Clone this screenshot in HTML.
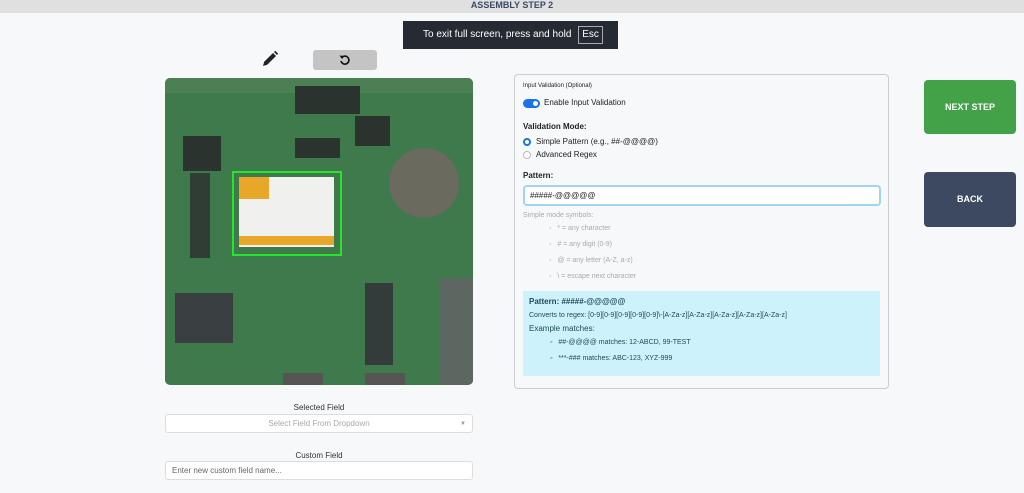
<!DOCTYPE html>
<html><head><meta charset="utf-8"><style>
*{box-sizing:border-box;margin:0;padding:0}
body{width:1024px;height:493px;background:#f7f8fa;font-family:"Liberation Sans",sans-serif;position:relative;overflow:hidden;color:#222}
.a{position:absolute}
.top{left:0;top:0;width:1024px;height:13px;background:#e0e0e0;text-align:center;font-size:9px;font-weight:bold;color:#3a4a66;line-height:10px}
.toast{left:403px;top:21px;width:215px;height:28px;background:#262a33;color:#fff;font-size:10px;line-height:28px;padding-left:20px}
.toast span{display:inline-block;border:1px solid #aaa;line-height:16px;padding:0 3px;margin-left:4px}
.panel{left:514px;top:74px;width:375px;height:315px;border:1px solid #ccc;border-radius:4px;background:#f7f8fa}
.t{position:absolute;font-size:8px;white-space:nowrap}
.g{color:#aaa}
.btn{width:92px;height:54px;border-radius:4px;color:#fff;font-size:9px;font-weight:bold;text-align:center;line-height:54px}
.inp{border:1px solid #ddd;background:#fff;border-radius:3px}
.blk{position:absolute;background:#2a332e}
</style></head><body>
<div class="a top">ASSEMBLY STEP 2</div>
<div class="a toast">To exit full screen, press and hold <span>Esc</span></div>
<svg class="a" style="left:261px;top:50px" width="18" height="18" viewBox="0 0 18 18"><path d="M2 16l1.2-4.2L12 3l3 3-8.8 8.8z" fill="#222"/><path d="M13 2l1.2-1.2 3 3L16 5z" fill="#222"/></svg>
<div class="a" style="left:313px;top:50px;width:64px;height:20px;background:#c4c4c4;border-radius:3px"></div>
<svg class="a" style="left:338px;top:53px" width="14" height="14" viewBox="0 0 14 14"><path d="M3.5 5A4 4 0 1 1 3 8" fill="none" stroke="#111" stroke-width="1.6"/><path d="M1.5 2.5L4 6 6.5 3z" fill="#111"/></svg>
<div class="a" style="left:165px;top:78px;width:308px;height:307px;border-radius:5px;background:#3e7a4c;overflow:hidden">
 <div class="blk" style="left:0;top:0;width:308px;height:15px;background:#4d7f55"></div>
 <div class="blk" style="left:18px;top:58px;width:38px;height:35px"></div>
 <div class="blk" style="left:25px;top:95px;width:20px;height:85px;background:#2f3d35"></div>
 <div class="blk" style="left:10px;top:215px;width:58px;height:50px;background:#3a3f42"></div>
 <div class="blk" style="left:130px;top:8px;width:40px;height:28px"></div>
 <div class="blk" style="left:155px;top:8px;width:40px;height:28px"></div>
 <div class="blk" style="left:130px;top:60px;width:45px;height:20px"></div>
 <div class="blk" style="left:190px;top:38px;width:35px;height:30px"></div>
 <div class="blk" style="left:200px;top:205px;width:28px;height:82px;background:#333c3a"></div>
 <div class="a" style="left:224px;top:70px;width:70px;height:70px;border-radius:50%;background:#6a6a5e"></div>
 <div class="blk" style="left:118px;top:295px;width:40px;height:15px;background:#555"></div>
 <div class="blk" style="left:200px;top:295px;width:40px;height:15px;background:#555"></div>
 <div class="a" style="left:275px;top:200px;width:33px;height:107px;background:#5b6760"></div>
 <div class="a" style="left:67px;top:93px;width:110px;height:85px;border:2px solid #27e52a"></div>
 <div class="a" style="left:74px;top:99px;width:95px;height:70px;background:#f0f0ee"></div>
 <div class="a" style="left:74px;top:99px;width:30px;height:22px;background:#e9a72a"></div>
 <div class="a" style="left:74px;top:158px;width:95px;height:9px;background:#e9a72a"></div>
</div>
<div class="t" style="left:165px;top:403px;width:308px;text-align:center;color:#333">Selected Field</div>
<div class="a inp" style="left:165px;top:414px;width:308px;height:19px;font-size:8px;color:#aaa;text-align:center;line-height:18px">Select Field From Dropdown<span style="position:absolute;right:6px;color:#999;font-size:6px">▼</span></div>
<div class="t" style="left:165px;top:451px;width:308px;text-align:center;color:#333">Custom Field</div>
<div class="a inp" style="left:165px;top:461px;width:308px;height:19px;font-size:8px;color:#666;line-height:18px;padding-left:6px">Enter new custom field name...</div>
<div class="a panel">
 <div class="t" style="left:8px;top:8px;font-size:6px">Input Validation (Optional)</div>
 <div class="a" style="left:8px;top:24px;width:17px;height:9px;border-radius:5px;background:#1a73e8"><div class="a" style="right:2px;top:2px;width:5px;height:5px;border-radius:50%;background:#fff"></div></div>
 <div class="t" style="left:29px;top:23px">Enable Input Validation</div>
 <div class="t" style="left:8px;top:47px;font-weight:bold">Validation Mode:</div>
 <div class="a" style="left:8px;top:63px;width:8px;height:8px;border-radius:50%;border:2.5px solid #1a73e8;background:#fff"></div>
 <div class="t" style="left:21px;top:62px">Simple Pattern (e.g., ##-@@@@)</div>
 <div class="a" style="left:8px;top:76px;width:8px;height:8px;border-radius:50%;border:1px solid #bbb;background:#fff"></div>
 <div class="t" style="left:21px;top:75px">Advanced Regex</div>
 <div class="t" style="left:8px;top:96px;font-weight:bold">Pattern:</div>
 <div class="a" style="left:8px;top:110px;width:358px;height:21px;border:2px solid #9fd4f7;border-radius:4px;background:#fff;font-size:8px;line-height:17px;padding-left:5px">#####-@@@@@</div>
 <div class="t g" style="left:8px;top:137px;font-size:7px">Simple mode symbols:</div>
 <div class="t g" style="left:34px;top:150px;font-size:7px">◦ &nbsp; * = any character</div>
 <div class="t g" style="left:34px;top:166px;font-size:7px">◦ &nbsp; # = any digit (0-9)</div>
 <div class="t g" style="left:34px;top:182px;font-size:7px">◦ &nbsp; @ = any letter (A-Z, a-z)</div>
 <div class="t g" style="left:34px;top:198px;font-size:7px">◦ &nbsp; \ = escape next character</div>
 <div class="a" style="left:8px;top:216px;width:357px;height:85px;background:#cdf2fb">
  <div class="t" style="left:6px;top:6px;font-weight:bold;color:#1d4a5a">Pattern: #####-@@@@@</div>
  <div class="t" style="left:6px;top:21px;font-size:7px;color:#1d4a5a">Converts to regex: [0-9][0-9][0-9][0-9][0-9]\-[A-Za-z][A-Za-z][A-Za-z][A-Za-z][A-Za-z]</div>
  <div class="t" style="left:6px;top:33px;color:#1d4a5a">Example matches:</div>
  <div class="t" style="left:27px;top:48px;font-size:7px;color:#1d4a5a">◦ &nbsp; ##-@@@@ matches: 12-ABCD, 99-TEST</div>
  <div class="t" style="left:27px;top:64px;font-size:7px;color:#1d4a5a">◦ &nbsp; ***-### matches: ABC-123, XYZ-999</div>
 </div>
</div>
<div class="a btn" style="left:924px;top:80px;background:#43a148">NEXT STEP</div>
<div class="a btn" style="left:924px;top:172px;background:#3d4960;height:55px;line-height:55px">BACK</div>
</body></html>
